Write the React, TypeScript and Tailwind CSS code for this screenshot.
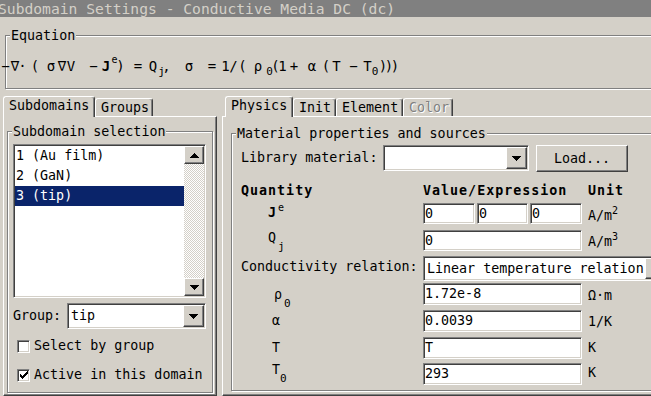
import React from 'react';

// classic win 3d borders
const sunken =
  'border border-t-[#808080] border-l-[#808080] border-b-white border-r-white shadow-[inset_1px_1px_0_#404040,inset_-1px_-1px_0_#d4d0c8] p-px';
const raised =
  'border border-t-white border-l-white border-b-[#404040] border-r-[#404040] shadow-[inset_-1px_-1px_0_#808080] bg-[#d4d0c8]';
const etched = 'border border-[#808080] shadow-[inset_1px_1px_0_#fff,1px_1px_0_#fff]';
const panel =
  'border border-t-white border-l-white border-r-[#404040] border-b-[#404040] shadow-[inset_-1px_-1px_0_#808080]';

type Kind = 'n' | 'b' | 'sup' | 'sub';

const kindCls: Record<Kind, string> = {
  n: 'text-[14px]',
  b: 'text-[14px] font-bold',
  sup: 'text-[10px] -translate-y-[6px]',
  sub: 'text-[11px] translate-y-[6px]',
};

// glyph centres measured off the dialog, stored as offsets
const eq: [string, string, Kind][] = [
  ['−', 'ml-[5.5px]', 'n'],
  ['∇', 'ml-[9.5px]', 'n'],
  ['·', 'ml-[7.5px]', 'n'],
  ['(', 'ml-[12.5px]', 'n'],
  ['σ', 'ml-[16px]', 'n'],
  ['∇', 'ml-[11px]', 'n'],
  ['V', 'ml-[9px]', 'n'],
  ['−', 'ml-[22.5px]', 'n'],
  ['J', 'ml-[12.5px]', 'b'],
  ['e', 'ml-[8.5px]', 'sup'],
  [')', 'ml-[6px]', 'n'],
  ['=', 'ml-[17.5px]', 'n'],
  ['Q', 'ml-[15px]', 'n'],
  ['j', 'ml-[8.5px]', 'sub'],
  [',', 'ml-[5px]', 'n'],
  ['σ', 'ml-[22.5px]', 'n'],
  ['=', 'ml-[23px]', 'n'],
  ['1', 'ml-[13.5px]', 'n'],
  ['/', 'ml-[8px]', 'n'],
  ['(', 'ml-[9px]', 'n'],
  ['ρ', 'ml-[15.5px]', 'n'],
  ['0', 'ml-[11.5px]', 'sub'],
  ['(', 'ml-[6px]', 'n'],
  ['1', 'ml-[7px]', 'n'],
  ['+', 'ml-[11.5px]', 'n'],
  ['α', 'ml-[18px]', 'n'],
  ['(', 'ml-[14px]', 'n'],
  ['T', 'ml-[10.5px]', 'n'],
  ['−', 'ml-[17px]', 'n'],
  ['T', 'ml-[14px]', 'n'],
  ['0', 'ml-[7.5px]', 'sub'],
  [')', 'ml-[8px]', 'n'],
  [')', 'ml-[6px]', 'n'],
  [')', 'ml-[6px]', 'n'],
];

const Arrow = ({ up = false }: { up?: boolean }) => (
  <svg width="9" height="5" viewBox="0 0 9 5" shapeRendering="crispEdges">
    <path d={up ? 'M0 5h9L4.5 0z' : 'M0 0h9L4.5 5z'} fill="#000" />
  </svg>
);

const DropBtn = () => (
  <div className={`${raised} w-[21px] h-full shrink-0 flex items-center justify-center`}>
    <Arrow />
  </div>
);

const Combo = ({ value, className }: { value: string; className: string }) => (
  <div className={`${sunken} bg-white flex shrink-0 ${className}`}>
    <div className="flex-1 pl-[2px] leading-[22px] whitespace-nowrap overflow-hidden">{value}</div>
    <DropBtn />
  </div>
);

const Input = ({ value, className }: { value: string; className: string }) => (
  <div className={`${sunken} bg-white flex items-center shrink-0 h-full ${className}`}>{value}</div>
);

const Checkbox = ({ checked = false }: { checked?: boolean }) => (
  <div className={`${sunken} p-0 w-[13px] h-[13px] bg-white flex items-center justify-center shrink-0`}>
    {checked && (
      <svg width="8" height="8" viewBox="0 0 8 8" shapeRendering="crispEdges">
        {[3, 4, 5, 4, 3, 2, 1, 0].map((y, x) => (
          <rect key={x} x={x} y={y} width="1" height="3" fill="#000" />
        ))}
      </svg>
    )}
  </div>
);

const Legend = ({ children }: { children: React.ReactNode }) => (
  <span className="absolute -top-[8px] left-[4px] bg-[#d4d0c8] px-px leading-[16px] whitespace-nowrap">
    {children}
  </span>
);

const Tab = ({ label, w, active = false, disabled = false }: { label: string; w: string; active?: boolean; disabled?: boolean }) => (
  <div
    className={`${active ? 'relative z-10 h-[21px] -mb-px leading-[18px]' : 'h-[18px] leading-[17px]'} ${w} shrink-0 bg-[#d4d0c8] border-l border-t border-r border-l-white border-t-white border-r-[#404040] shadow-[inset_-1px_0_0_#808080] rounded-t-[3px] pl-[5px] whitespace-nowrap ${
      disabled ? 'text-[#808080] [text-shadow:1px_1px_0_#fff]' : ''
    }`}
  >
    {label}
  </div>
);

const Sup = ({ children }: { children: React.ReactNode }) => (
  <span className="inline-block text-[10px] -translate-y-[6px]">{children}</span>
);

const Sub = ({ children, cls = 'translate-y-[8px]' }: { children: React.ReactNode; cls?: string }) => (
  <span className={`inline-block text-[11px] ${cls}`}>{children}</span>
);

const Row = ({ mt, h, label, field, unit }: { mt: string; h: string; label: React.ReactNode; field: React.ReactNode; unit: React.ReactNode }) => (
  <div className={`flex items-center ml-[9px] ${mt} ${h}`}>
    <div className="w-[182px] shrink-0 whitespace-nowrap">{label}</div>
    <div className="w-[165px] shrink-0 h-full flex gap-[2px]">{field}</div>
    <div className="whitespace-nowrap">{unit}</div>
  </div>
);

export default function App() {
  return (
    <div className="w-[651px] h-[396px] overflow-hidden bg-[#d4d0c8] text-black font-['DejaVu_Sans_Mono',monospace] text-[13.33px] leading-[16px]">
      {/* caption (inactive) */}
      <div className="h-[17px] bg-[#808080] text-[#d4d0c8] text-[14.67px] leading-[17px] whitespace-nowrap overflow-hidden">
        <span className="inline-block -ml-[2px]">Subdomain Settings - Conductive Media DC (dc)</span>
      </div>

      {/* Equation */}
      <div className={`relative ${etched} mt-[18px] ml-[5px] w-[700px] h-[54px]`}>
        <Legend>Equation</Legend>
        <div className="flex items-center h-[20px] mt-[20px] -ml-[6px] whitespace-nowrap">
          {eq.map(([c, ml, k], i) => (
            <span key={i} className={`flex w-0 shrink-0 justify-center ${ml} ${kindCls[k]}`}>
              {c}
            </span>
          ))}
        </div>
      </div>

      <div className="flex items-start mt-[7px]">
        {/* left tabs */}
        <div className="ml-[3px] w-[214px] shrink-0">
          <div className="flex items-end h-[20px]">
            <Tab label="Subdomains" w="w-[92px]" active />
            <Tab label="Groups" w="w-[58px]" />
          </div>
          <div className={`${panel} h-[280px]`}>
            <div className={`relative ${etched} ml-[3px] mt-[14px] w-[206px] h-[262px]`}>
              <Legend>Subdomain selection</Legend>

              <div className={`${sunken} bg-white flex ml-[5px] mt-[12px] w-[193px] h-[154px]`}>
                <div className="flex-1">
                  {['1 (Au film)', '2 (GaN)', '3 (tip)'].map((t, i) => (
                    <div key={t} className={`h-[20px] leading-[20px] pl-px whitespace-nowrap ${i === 2 ? 'bg-[#0a246a] text-white' : ''}`}>
                      {t}
                    </div>
                  ))}
                </div>
                <div className="w-[20px] flex flex-col shrink-0">
                  <div className={`${raised} h-[18px] flex items-center justify-center`}>
                    <Arrow up />
                  </div>
                  <div className="flex-1 bg-[conic-gradient(#fff_25%,#d4d0c8_0_50%,#fff_0_75%,#d4d0c8_0)] bg-[length:2px_2px]" />
                  <div className={`${raised} h-[18px] flex items-center justify-center`}>
                    <Arrow />
                  </div>
                </div>
              </div>

              <div className="flex items-center mt-[5px] ml-[5px] h-[26px]">
                <span className="w-[54px] shrink-0">Group:</span>
                <Combo value="tip" className="w-[139px] h-[26px]" />
              </div>

              <div className="flex items-center gap-[4px] ml-[9px] mt-[9px] h-[16px]">
                <Checkbox />
                <span>Select by group</span>
              </div>
              <div className="flex items-center gap-[4px] ml-[9px] mt-[13px] h-[16px]">
                <Checkbox checked />
                <span>Active in this domain</span>
              </div>
            </div>
          </div>
        </div>

        {/* right tabs */}
        <div className="ml-[5px] w-[440px] shrink-0">
          <div className="flex items-end h-[20px] pl-[3px]">
            <Tab label="Physics" w="w-[68px]" active />
            <Tab label="Init" w="w-[43px]" />
            <Tab label="Element" w="w-[67px]" />
            <Tab label="Color" w="w-[50px]" disabled />
          </div>
          <div className={`${panel} h-[280px]`}>
            <div className={`relative ${etched} ml-[8px] mt-[16px] w-[500px] h-[258px]`}>
              <Legend>Material properties and sources</Legend>

              <div className="flex items-start mt-[11px] ml-[9px] h-[27px]">
                <span className="w-[142px] shrink-0 leading-[26px]">Library material:</span>
                <Combo value="" className="w-[146px] h-[26px]" />
                <div className={`${raised} ml-[7px] w-[92px] h-[27px] flex items-center justify-center shrink-0`}>Load...</div>
              </div>

              <div className="flex mt-[11px] ml-[9px] h-[16px] font-bold tracking-[1px] whitespace-nowrap">
                <span className="w-[182px] shrink-0">Quantity</span>
                <span className="w-[165px] shrink-0">Value/Expression</span>
                <span>Unit</span>
              </div>

              <Row
                mt="mt-[4px]"
                h="h-[21px]"
                label={
                  <span className="pl-[27px]">
                    <b>J</b>
                    <span className="ml-[2px]"><Sup>e</Sup></span>
                  </span>
                }
                field={
                  <>
                    <Input value="0" className="w-[52px]" />
                    <Input value="0" className="w-[51px]" />
                    <Input value="0" className="w-[52px]" />
                  </>
                }
                unit={
                  <span className="inline-block translate-y-[3px]">
                    A/m<Sup>2</Sup>
                  </span>
                }
              />
              <Row
                mt="mt-[6px]"
                h="h-[21px]"
                label={
                  <span className="inline-block pl-[27px] -translate-y-[2px]">
                    Q<span className="ml-[2px]"><Sub>j</Sub></span>
                  </span>
                }
                field={<Input value="0" className="w-[159px]" />}
                unit={
                  <span className="inline-block translate-y-[2px]">
                    A/m<Sup>3</Sup>
                  </span>
                }
              />
              <Row
                mt="mt-[5px]"
                h="h-[25px]"
                label={<span className="inline-block -translate-y-[2px]">Conductivity relation:</span>}
                field={<Combo value="Linear temperature relation" className="w-[245px] h-[25px]" />}
                unit={null}
              />
              <Row
                mt="mt-[2px]"
                h="h-[22px]"
                label={
                  <span className="inline-block pl-[33px] translate-y-px">
                    ρ<span className="ml-[2px]"><Sub>0</Sub></span>
                  </span>
                }
                field={<Input value="1.72e-8" className="w-[159px]" />}
                unit={<span className="inline-block translate-y-[2px]">Ω·m</span>}
              />
              <Row
                mt="mt-[5px]"
                h="h-[22px]"
                label={<span className="pl-[31px]">α</span>}
                field={<Input value="0.0039" className="w-[159px]" />}
                unit={<span className="inline-block translate-y-px">1/K</span>}
              />
              <Row
                mt="mt-[5px]"
                h="h-[22px]"
                label={<span className="pl-[31px]">T</span>}
                field={<Input value="T" className="w-[159px]" />}
                unit="K"
              />
              <Row
                mt="mt-[4px]"
                h="h-[22px]"
                label={
                  <span className="inline-block pl-[31px] -translate-y-[4px]">
                    T<Sub>0</Sub>
                  </span>
                }
                field={<Input value="293" className="w-[159px]" />}
                unit={<span className="inline-block -translate-y-px">K</span>}
              />
            </div>
          </div>
        </div>
      </div>
    </div>
  );
}
